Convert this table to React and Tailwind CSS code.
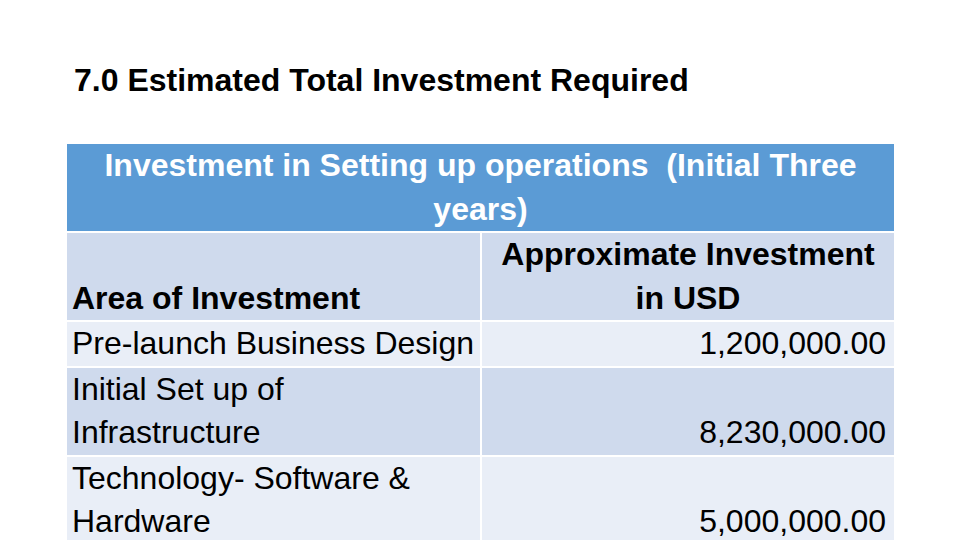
export default function App() {
  const font = { fontFamily: '"Liberation Sans", Arial, sans-serif' };
  return (
    <div className="w-[960px] h-[540px] bg-white overflow-hidden relative" style={font}>
      <div className="pt-[64px] pl-[74px] text-[32px] font-bold leading-[32px] text-black">
        7.0 Estimated Total Investment Required
      </div>
      <div className="mt-[48px] ml-[67px] w-[827px] grid grid-cols-[413px_412px] gap-[2px] bg-white text-[32px] leading-[43.5px] text-black">
        <div className="col-span-2 bg-[#5b9bd5] text-white font-bold text-center px-[30px]">
          Investment in Setting up operations&nbsp; (Initial Three years)
        </div>
        <div className="bg-[#cfdaed] font-bold flex items-end pl-[5px] h-[87px]">Area of Investment</div>
        <div className="bg-[#cfdaed] font-bold text-center h-[87px]">Approximate Investment<br />in USD</div>
        <div className="bg-[#e9eef7] pl-[5px]">Pre-launch Business Design</div>
        <div className="bg-[#e9eef7] text-right pr-[8px]">1,200,000.00</div>
        <div className="bg-[#cfdaed] pl-[5px]">Initial Set up of<br />Infrastructure</div>
        <div className="bg-[#cfdaed] text-right pr-[8px] flex items-end justify-end">8,230,000.00</div>
        <div className="bg-[#e9eef7] pl-[5px]">Technology- Software &amp;<br />Hardware</div>
        <div className="bg-[#e9eef7] text-right pr-[8px] flex items-end justify-end">5,000,000.00</div>
      </div>
    </div>
  );
}
